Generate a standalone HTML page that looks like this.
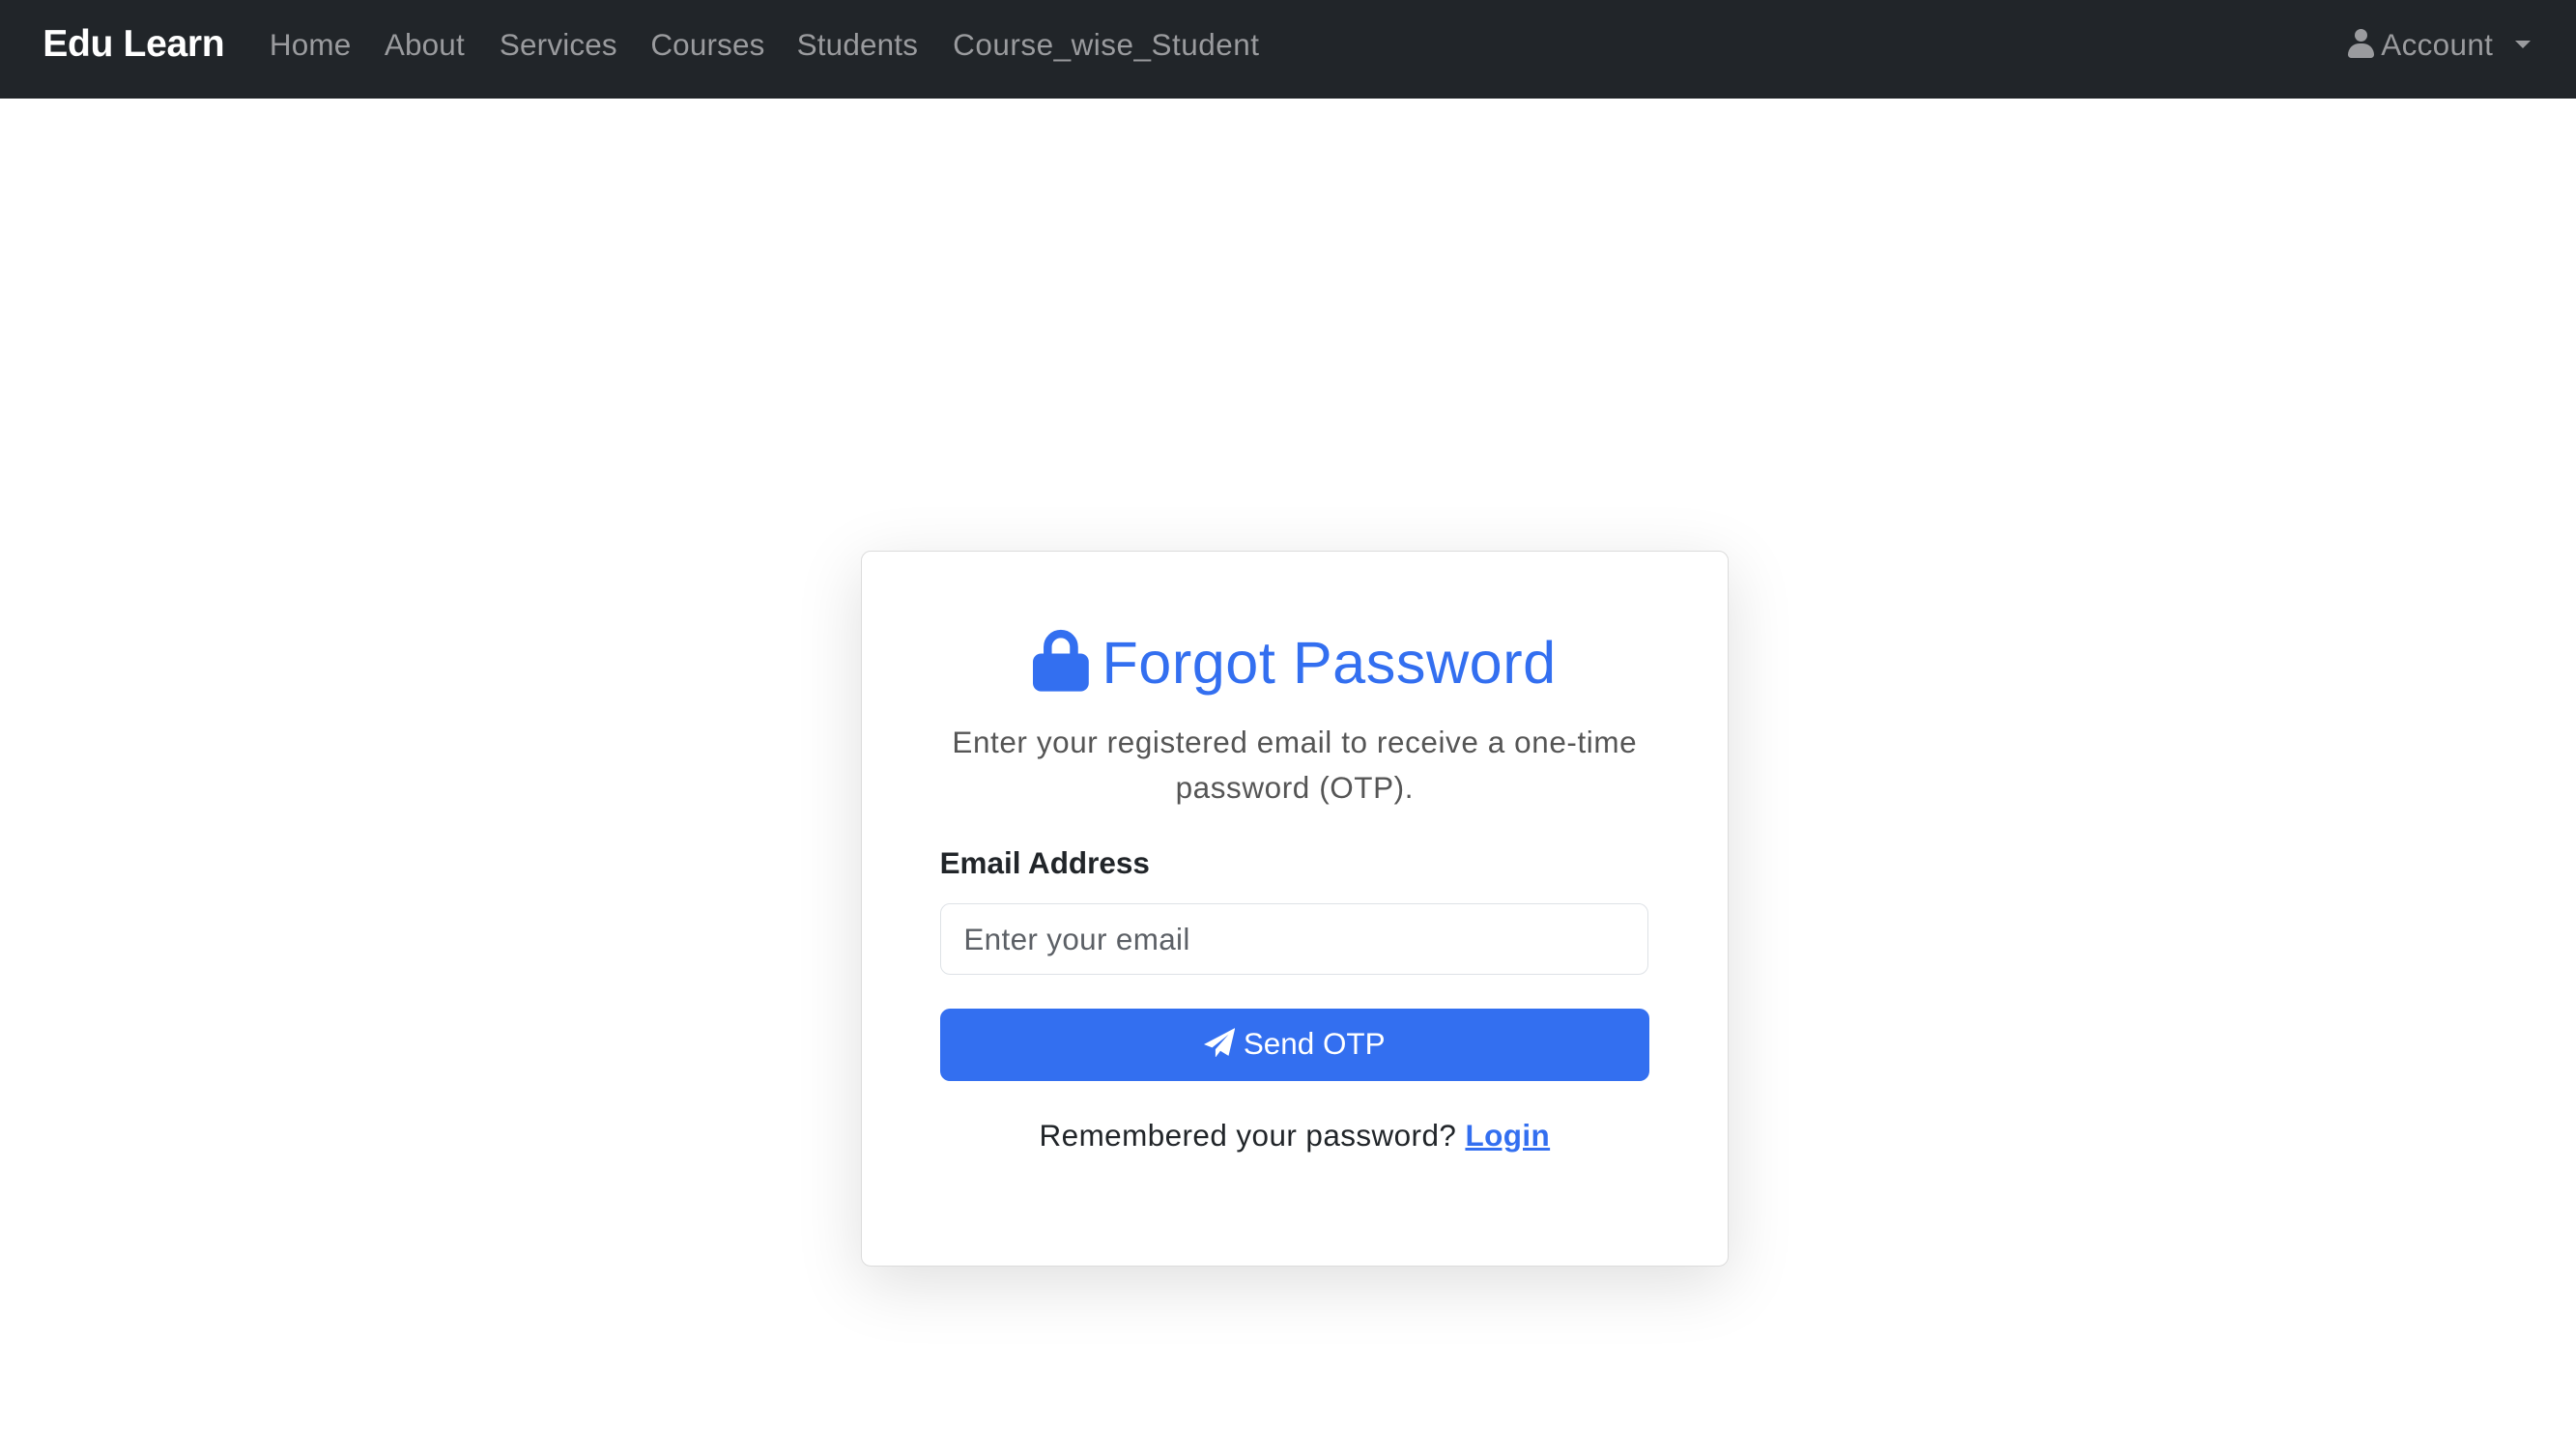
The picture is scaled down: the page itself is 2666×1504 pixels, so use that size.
<!DOCTYPE html>
<html><head><meta charset="utf-8">
<style>
html,body{margin:0;padding:0;background:#fff;overflow:hidden;}
body{width:2666px;height:1504px;}
#w{zoom:1.7003;width:1568px;height:885px;position:relative;font-family:"Liberation Sans",Arial,sans-serif;}
.nav{position:absolute;left:0;top:0;width:1568px;height:60px;background:#212529;}
.brand{position:absolute;left:26px;top:14px;color:#fff;font-weight:bold;font-size:23px;letter-spacing:-0.2px;}
.l{position:absolute;top:17px;color:#9a9b9e;font-size:18.5px;letter-spacing:0.1px;white-space:nowrap;}
.acct{position:absolute;left:1429px;top:17px;color:#9a9b9e;font-size:18.5px;letter-spacing:0.2px;}
.card{position:absolute;left:524px;top:335px;width:527px;height:435px;border:1px solid #dcdcdc;border-radius:6px;box-shadow:0 10px 40px rgba(0,0,0,.13);background:#fff;}
.title{position:absolute;left:0;width:1576px;top:383px;text-align:center;color:#336ff0;font-size:36px;font-weight:500;letter-spacing:0.3px;}
.sub{position:absolute;left:548px;width:480px;top:438px;text-align:center;color:#555;font-size:18.5px;letter-spacing:0.35px;line-height:28px;}
.lbl{position:absolute;left:572px;top:515px;font-weight:bold;font-size:18.5px;color:#212529;}
.inp{position:absolute;left:572px;top:550px;width:430px;height:42px;border:1px solid #dee2e6;border-radius:6px;}
.inp span{position:absolute;left:14px;top:11px;font-size:18.5px;letter-spacing:0.2px;color:#5c6066;}
.btn{position:absolute;left:572px;top:614px;width:432px;height:44px;border-radius:6px;background:#336ff0;color:#fff;font-size:18.5px;text-align:center;line-height:44px;}
.rem{position:absolute;left:0;width:1576px;top:681px;text-align:center;font-size:18.5px;letter-spacing:0.25px;color:#212529;}
.rem a{color:#336ff0;font-weight:bold;text-decoration:underline;}
</style></head><body><div id="w">
<div class="nav">
<div class="brand">Edu Learn</div>
<div class="l" style="left:164px">Home</div>
<div class="l" style="left:234px">About</div>
<div class="l" style="left:304px">Services</div>
<div class="l" style="left:396px">Courses</div>
<div class="l" style="left:485px">Students</div>
<div class="l" style="left:580px;letter-spacing:0.3px">Course_wise_Student</div>
<div class="acct"><span style="display:inline-block;width:16px;height:18px;position:relative;vertical-align:-2px;"><span style="position:absolute;left:4px;top:0;width:8px;height:8px;border-radius:50%;background:#9a9b9e"></span><span style="position:absolute;left:0;top:9px;width:16px;height:9px;border-radius:7px 7px 2px 2px;background:#9a9b9e"></span></span> Account <span style="display:inline-block;margin-left:8px;width:0;height:0;border-left:5px solid transparent;border-right:5px solid transparent;border-top:5px solid #9a9b9e;vertical-align:4px"></span></div>
</div>
<div class="card"></div>
<div class="title"><svg width="34" height="38" viewBox="0 0 34 38" style="vertical-align:-5px;margin-right:8px"><path d="M9 16V11a8 8 0 0 1 16 0v5" fill="none" stroke="#336ff0" stroke-width="5"/><rect x="0" y="15" width="34" height="23" rx="5" fill="#336ff0"/></svg>Forgot Password</div>
<div class="sub">Enter your registered email to receive a one-time password (OTP).</div>
<div class="lbl">Email Address</div>
<div class="inp"><span>Enter your email</span></div>
<div class="btn"><svg width="19" height="18" viewBox="0 0 19 18" style="vertical-align:-2px;margin-right:5px"><path d="M19 0L0 10l5 2 10-8-8 9v5l3-4 5 3z" fill="#fff"/></svg>Send OTP</div>
<div class="rem">Remembered your password? <a>Login</a></div>
</div></body></html>
